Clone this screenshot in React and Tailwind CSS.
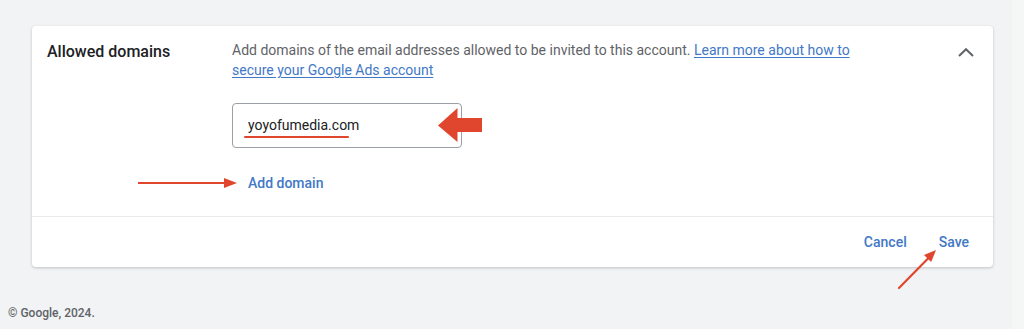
const RED = '#e0462e';

const ChevronUp = () => (
  <svg width="16" height="9" viewBox="0 0 16 9" fill="none">
    <polyline points="1,8 8,1.2 15,8" stroke="#5f6368" strokeWidth="2" strokeLinejoin="miter" />
  </svg>
);

// red annotation marks drawn over the screenshot
const Annotations = () => (
  <>
    <svg className="absolute left-[438px] top-[108px]" width="44" height="34" viewBox="0 0 44 34">
      <path d="M0 17.5 L19.5 0 L19.5 10 L44 10 L44 24 L19.5 24 L19.5 34 Z" fill={RED} />
    </svg>
    <div className="absolute left-[244px] top-[136px] w-[105px] h-[2px] rounded-full bg-[#e0462e]" />
    <svg className="absolute left-[138px] top-[177px]" width="100" height="12" viewBox="0 0 100 12">
      <line x1="0" y1="6" x2="88" y2="6" stroke={RED} strokeWidth="2.2" />
      <polygon points="86,1 99,6 86,11" fill={RED} />
    </svg>
    <svg className="absolute left-[895px] top-[246px]" width="46" height="46" viewBox="0 0 46 46">
      <line x1="4" y1="42" x2="33" y2="12.5" stroke={RED} strokeWidth="2.2" strokeLinecap="round" />
      <polygon points="41,4 36.2,16.1 29,9.1" fill={RED} />
    </svg>
  </>
);

export default function App() {
  return (
    <div className="relative w-[1024px] h-[329px] overflow-hidden bg-[#f1f3f4] flex font-['Roboto',sans-serif]">
      <div className="flex-1 flex flex-col pt-[26px] pl-[32px] pr-[19px]">
        <div className="bg-white rounded-[4px] shadow-[0_1px_3px_rgba(60,64,67,0.28)]">
          <div className="flex pt-[14px] pl-[15px] pr-[15px] pb-[23px]">
            <div className="w-[185px] shrink-0 text-[16px] leading-6 font-medium text-[#202124]">
              Allowed domains
            </div>
            <div className="flex-1">
              <p className="w-[640px] text-[14px] leading-5 text-[#5f6368]">
                Add domains of the email addresses allowed to be invited to this account.{' '}
                <a href="#" className="text-[#4278c8] underline underline-offset-2">
                  Learn more about how to secure your Google Ads account
                </a>
              </p>
              <div className="mt-[23px] w-[230px] h-[45px] border border-[#9aa0a6] rounded-[4px] flex items-center pl-[15px] text-[14px] text-[#202124]">
                yoyofumedia.com
              </div>
              <div className="mt-[25px] pl-4 text-[14px] leading-5 font-medium text-[#4278c8]">
                Add domain
              </div>
            </div>
            <div className="w-6 h-6 flex items-center justify-center">
              <ChevronUp />
            </div>
          </div>
          <div className="h-[51px] border-t border-[#e8eaed] flex items-center justify-end gap-8 pr-6 text-[14px] font-medium text-[#4278c8]">
            <span>Cancel</span>
            <span>Save</span>
          </div>
        </div>
        <div className="mt-[38px] -ml-[24px] text-[12px] leading-4 font-medium text-[#5f6368]">
          © Google, 2024.
        </div>
      </div>
      <div className="w-[12px] bg-[#f5f6f6]" />
      <Annotations />
    </div>
  );
}
